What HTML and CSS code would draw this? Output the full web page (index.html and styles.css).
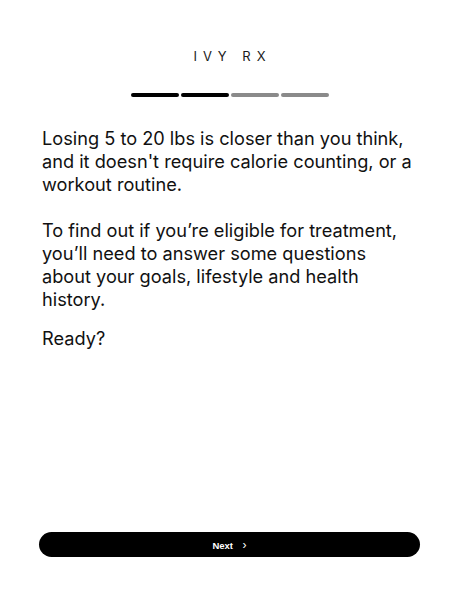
FILE: index.html
```html
<!DOCTYPE html>
<html>
<head>
<meta charset="utf-8">
<link rel="stylesheet" href="styles.css">
</head>
<body>
  <div class="page">
    <div class="brand">IVY RX</div>

    <div class="progress"> <!-- 2 of 4 steps done -->
      <span class="step done"></span>
      <span class="step done"></span>
      <span class="step"></span>
      <span class="step"></span>
    </div>

    <div class="intro">
      <p>Losing 5 to 20 lbs is closer than you think, and it doesn't require calorie counting, or a workout routine.</p>
      <p>To find out if you’re eligible for treatment, you’ll need to answer some questions about your goals, lifestyle and health history.</p>
      <p class="ready">Ready?</p>
    </div>

    <button class="next">Next <span class="chev">›</span></button>
  </div>
</body>
</html>
```

FILE: styles.css
```css
html, body
{
  margin: 0;
  padding: 0;
  background: #fff;
}

.page
{
  height: 600px;
  display: flex;
  flex-direction: column;
  box-sizing: border-box;
  padding: 48px 30px 43px 39px;
  font-family: Inter, "Liberation Sans", sans-serif;
  color: #111;
}

.brand /* logo, widely tracked */
{
  text-align: center;
  font-size: 13px;
  letter-spacing: 6px;
  padding-left: 6px;
  color: #1a1a1a;
  line-height: 16px;
}

.progress
{
  display: flex;
  gap: 2px;
  width: 198px;
  margin: 29px auto 0 auto;
}

.progress > .step
{
  flex: 1;
  height: 4px;
  border-radius: 2px;
  background: #8a8a8a;
}

.progress > .step.done { background: #000; }

.intro
{
  margin-top: 30px;
  padding-left: 3px;
  width: 370px;
  font-size: 18.2px;
  line-height: 23.2px;
}

.intro p { margin: 0 0 22px 0; }
.intro p:nth-child(2) { margin-bottom: 16px; }

.next
{
  margin-top: auto;
  width: 381px;
  height: 25px;
  border: none;
  border-radius: 13px;
  background: #000;
  color: #fff;
  font-family: "Liberation Sans", sans-serif;
  font-weight: bold;
  font-size: 9.5px;
  cursor: pointer;
}

.next .chev
{
  margin-left: 7px;
  font-size: 12px;
  font-weight: normal;
}
```
